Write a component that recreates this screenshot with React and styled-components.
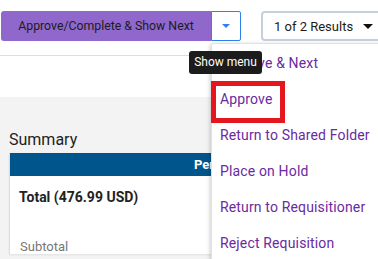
import React from 'react';
import styled, { createGlobalStyle } from 'styled-components';

const Global = createGlobalStyle`
  html, body {
    margin: 0;
    padding: 0;
    background: #fff;
    font-family: Roboto, 'Liberation Sans', sans-serif;
    overflow: hidden;
  }
`

const Page = styled.div`
  position: relative;
  width: 378px;
  height: 259px;
  overflow: hidden;
`
const Toolbar = styled.div`
  display: flex;
  align-items: center;
  padding: 11px 0 0 1px;
  height: 30px;
  gap: 20px;
`
const SplitButton = styled.div`
  display: flex;
  height: 30px;
`
const MainButton = styled.button`
  width: 210px;
  height: 30px;
  border: none;
  border-radius: 3px 0 0 3px;
  background: #9068cc;
  color: #1b1b22;
  font-family: Roboto, sans-serif;
  font-size: 12.3px;
  padding: 0;
`
const ToggleButton = styled.button`
  width: 30px;
  height: 30px;
  box-sizing: border-box;
  border: 1px solid #2f80f0;
  border-radius: 0 2px 2px 0;
  background: #fff;
  display: flex;
  align-items: center;
  justify-content: center;
  padding: 0;
`
const Caret = styled.span`
  width: 0;
  height: 0;
  border-left: ${({ size }) => size}px solid transparent;
  border-right: ${({ size }) => size}px solid transparent;
  border-top: ${({ size }) => size}px solid ${({ color }) => color};
`
const ResultsSelect = styled.div`
  display: flex;
  align-items: center;
  gap: 10px;
  box-sizing: border-box;
  height: 30px;
  width: 140px;
  flex-shrink: 0;
  padding-left: 11px;
  border: 2px solid #c6cfdc;
  border-radius: 4px;
  font-size: 13px;
  color: #1b1b1b;
`
const Divider = styled.div`
  margin-top: 14px;
  height: 1px;
  background: #dcdde3;
`
const Spacer = styled.div`
  height: 41px;
`
const Content = styled.div`
  background: #f3f3f3;
  padding: 34px 0 0 9px;
  height: 200px;
`
const Heading = styled.h2`
  margin: 0 0 4px;
  font-size: 16px;
  font-weight: 400;
  color: #1e1e1e;
  line-height: 18px;
`
const Card = styled.div`
  width: 400px;
  background: #fff;
  border-left: 1px solid #dedede;
  box-shadow: 0 1px 2px rgba(0, 0, 0, 0.08);
`
const CardHeader = styled.div`
  height: 23px;
  background: #00558c;
  color: #fff;
  font-weight: 700;
  font-size: 13px;
  line-height: 23px;
  padding-left: 184px;
`
const CardBody = styled.div`
  padding: 12px 0 0 9px;
`
const TotalLabel = styled.div`
  font-size: 14px;
  font-weight: 700;
  color: #222;
  line-height: 18px;
  margin-bottom: 33px;
`
const SubLabel = styled.div`
  font-size: 13px;
  color: #777;
  padding-left: 1px;
`
const Menu = styled.ul`
  position: absolute;
  left: 211px;
  top: 43px;
  width: 175px;
  margin: 0;
  padding: 1px 0 0;
  list-style: none;
  background: #fff;
  border: 1px solid #e2e2e2;
  border-radius: 3px;
  box-shadow: -1px 1px 4px rgba(0, 0, 0, 0.2);
`
const MenuItem = styled.li`
  position: relative;
  height: 36px;
  line-height: 36px;
  padding-left: 8px;
  font-size: 14px;
  letter-spacing: 0.15px;
  color: #6a2aa0;
  white-space: nowrap;
`
const Highlight = styled.span`
  position: absolute;
  left: -1px;
  top: 0;
  width: 74px;
  height: 42px;
  box-sizing: border-box;
  border: 5px solid #e3171d;
`
const Tooltip = styled.div`
  position: absolute;
  left: 189px;
  top: 51px;
  width: 73px;
  height: 23px;
  border-radius: 3px;
  background: #1c1c1c;
  color: #fff;
  font-size: 12px;
  line-height: 23px;
  text-align: center;
`

const items = [
  'Approve & Next',
  'Approve',
  'Return to Shared Folder',
  'Place on Hold',
  'Return to Requisitioner',
  'Reject Requisition',
];

export default function App() {
  return (
    <Page>
      <Global />
      <Toolbar>
        <SplitButton>
          <MainButton>Approve/Complete &amp; Show Next</MainButton>
          <ToggleButton aria-label="Show menu">
            <Caret size={4} color="#2f80f0" />
          </ToggleButton>
        </SplitButton>
        <ResultsSelect>
          1 of 2 Results
          <Caret size={5} color="#111" />
        </ResultsSelect>
      </Toolbar>
      <Divider />
      <Spacer />
      <Content>
        <Heading>Summary</Heading>
        <Card>
          <CardHeader>Pending Approval</CardHeader>
          <CardBody>
            <TotalLabel>Total (476.99 USD)</TotalLabel>
            <SubLabel>Subtotal</SubLabel>
          </CardBody>
        </Card>
      </Content>
      <Menu>
        {items.map((label) => (
          <MenuItem key={label}>
            {label}
            {label === 'Approve' && <Highlight />}
          </MenuItem>
        ))}
      </Menu>
      <Tooltip>Show menu</Tooltip>
    </Page>
  );
}
